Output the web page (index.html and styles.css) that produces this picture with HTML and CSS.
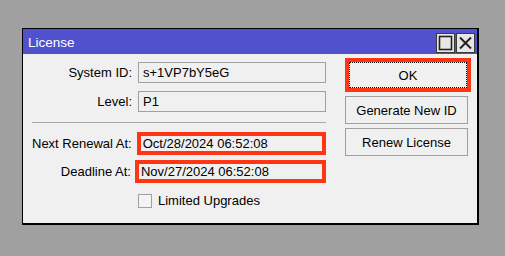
FILE: index.html
```html
<!DOCTYPE html>
<html>

<head>
  <title>License</title>
  <link rel="stylesheet" href="styles.css">
</head>

<body>

  <div class="win">
    <div class="title-bar">
      <span class="title">License</span>
      <div class="title-btns">
        <svg class="tbtn" width="19" height="20" viewBox="0 0 19 20">
          <rect x="0.5" y="0.5" width="18" height="19" fill="#e6e6e6" stroke="#3a3a3a"/>
          <rect x="3.5" y="3.5" width="12" height="13" fill="none" stroke="#222" stroke-width="1.6"/>
        </svg>
        <svg class="tbtn" width="19" height="20" viewBox="0 0 19 20">
          <rect x="0.5" y="0.5" width="18" height="19" fill="#e6e6e6" stroke="#3a3a3a"/>
          <path d="M4 4.5 L15 15.5 M15 4.5 L4 15.5" stroke="#222" stroke-width="2"/>
        </svg>
      </div>
    </div>

    <div class="win-body">
      <div class="form">
        <div class="row">
          <span class="lbl">System ID:</span>
          <span class="field">s+1VP7bY5eG</span>
        </div>
        <div class="row row-level">
          <span class="lbl">Level:</span>
          <span class="field">P1</span>
        </div>

        <div class="sep"></div>

        <div class="row row-renew">
          <span class="lbl">Next Renewal At:</span>
          <span class="field field-mark field-next">Oct/28/2024 06:52:08</span>
        </div>
        <div class="row row-deadline">
          <span class="lbl">Deadline At:</span>
          <span class="field field-mark field-deadline">Nov/27/2024 06:52:08</span>
        </div>

        <label class="check-row">
          <span class="check-box"></span>
          <span>Limited Upgrades</span>
        </label>
      </div>

      <div class="buttons">
        <div class="ok-mark">
          <button class="btn btn-ok">OK</button>
        </div>
        <button class="btn">Generate New ID</button>
        <button class="btn btn-renew">Renew License</button>
      </div>
    </div>
  </div>

</body>

</html>
```

FILE: styles.css
```css
body{
  margin: 0;
  background-color: #a0a0a0;
  font-family: "Liberation Sans", Arial, sans-serif;
  font-size: 13px;
  color: #000;
}

.win{
  margin: 28px 0 0 22px;
  width: 454px;
  border-top: 1px solid #000;
  border-left: 1px solid #000;
  border-right: 2px solid #000;
  border-bottom: 2px solid #000;
  background-color: #f0f0f0;
}

.title-bar{
  height: 25px;
  background-color: #5151cd;
  display: flex;
  align-items: center;
  justify-content: space-between;
  padding: 0 2px 0 5px;
}

.title{
  color: white;
  font-size: 13.5px;
  margin-top: 1px;
}

.title-btns{
  display: flex;
  gap: 1px;
  margin-top: 2px;
}

.tbtn{
  display: block;
}

.win-body{
  height: 169px;
  display: flex;
  padding-left: 9px;
}

.form{
  width: 294px;
  padding-top: 8px;
}

.row{
  display: flex;
  align-items: center;
}

.lbl{
  width: 100px;
  text-align: right;
  white-space: nowrap;
  margin-right: 6px;
}

.field{
  box-sizing: border-box;
  width: 188px;
  height: 21px;
  line-height: 19px;
  border: 1px solid #a0a0a0;
  padding: 0 4px;
  white-space: nowrap;
}

.row-level{
  margin-top: 8px;
}

.sep{
  margin-top: 10px;
  height: 1px;
  background-color: #a8a8a8;
}

.row-renew{
  margin-top: 9px;
}

.row-deadline{
  margin-top: 5px;
}

.field-mark{
  height: 23px;
  line-height: 15px;
  border: 4px solid #ff3514;
  padding: 0 2px;
}

.field-next{
  width: 190px;
  margin-left: -1px;
}

.field-deadline{
  width: 193px;
  margin-left: -2px;
}

.check-row{
  display: flex;
  align-items: center;
  gap: 6px;
  margin-top: 10px;
  margin-left: 106px;
}

.check-box{
  box-sizing: border-box;
  width: 14px;
  height: 14px;
  border: 1px solid #a0a0a0;
  background-color: #f4f4f4;
}

.buttons{
  margin-left: 19px;
  padding-top: 4px;
  display: flex;
  flex-direction: column;
  align-items: flex-start;
}

.ok-mark{
  border: 4px solid #ff3514;
  width: 118px;
  height: 26px;
}

.btn{
  box-sizing: border-box;
  width: 123px;
  height: 28px;
  margin-top: 4px;
  background-color: #f0f0f0;
  border: 1px solid #a0a0a0;
  font-family: "Liberation Sans", Arial, sans-serif;
  font-size: 13px;
  color: #000;
  padding: 0;
}

.btn-ok{
  width: 118px;
  height: 26px;
  margin-top: 0;
  border: 1px dotted #000;
}
```
